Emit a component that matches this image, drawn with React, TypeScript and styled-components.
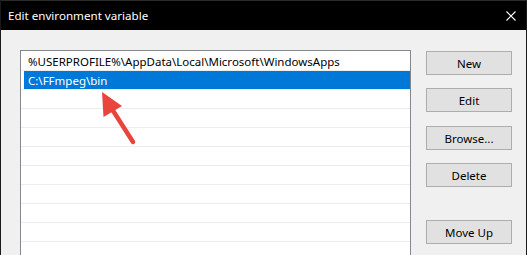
import React from "react";
import styled, { createGlobalStyle } from "styled-components";

const Global = createGlobalStyle`
  html, body { margin: 0; padding: 0; background: #f0f0f0; }
  body { width: 527px; height: 255px; overflow: hidden; }
`;

const Window = styled.div`
  position: relative;
  width: 527px;
  height: 255px;
  box-sizing: border-box;
  border-left: 1px solid #1a1a1a;
  border-right: 1px solid #1a1a1a;
  background: #f0f0f0;
  font-family: "Noto Sans", "Open Sans", sans-serif;
  font-size: 11.5px;
  display: flex;
  flex-direction: column;
  overflow: hidden;
`;

const TitleBar = styled.div`
  height: 30px;
  flex: none;
  background: #000;
  color: #fff;
  display: flex;
  align-items: center;
  justify-content: space-between;
  padding: 0 10px 0 8px;
  margin-left: -1px;
  margin-right: -1px;
  border-top: 1px solid #2b2b2b;
  box-sizing: border-box;
`;

const Title = styled.span`
  font-size: 11.6px;
`;

const CloseIcon = styled.svg`
  width: 10px;
  height: 10px;
  margin-right: 1px;
`;

const Body = styled.div`
  flex: 1;
  display: flex;
  align-items: flex-start;
  padding: 20px 14px 0 19px;
  gap: 15px;
`;

const ListBox = styled.div`
  position: relative;
  width: 391px;
  height: 260px;
  box-sizing: border-box;
  border: 1px solid #828790;
  background: #fff;
  padding-top: 1px;
  flex: none;
`;

const Row = styled.div`
  height: 19px;
  box-sizing: border-box;
  border-bottom: 1px solid #ececec;
  display: flex;
  align-items: center;
  padding-left: 3px;
`;

const RowText = styled.div<{ $selected?: boolean }>`
  flex: 1;
  height: 100%;
  display: flex;
  align-items: center;
  padding-left: 4px;
  background: ${(p) => (p.$selected ? "#0078d7" : "transparent")};
  color: ${(p) => (p.$selected ? "#fff" : "#000")};
  white-space: nowrap;
`;

const Buttons = styled.div`
  display: flex;
  flex-direction: column;
  padding-top: 1px;
  width: 86px;
  flex: none;
`;

const Button = styled.button<{ $gap: number }>`
  height: 24px;
  width: 86px;
  margin-bottom: ${(p) => p.$gap}px;
  box-sizing: border-box;
  border: 1px solid #adadad;
  background: #e1e1e1;
  color: #000;
  font-family: inherit;
  font-size: 11.5px;
  padding: 0;
`;

const Arrow = styled.svg`
  position: absolute;
  left: 0;
  top: 0;
  pointer-events: none;
`;

export default function App() {
  const rows = [
    "%USERPROFILE%\\AppData\\Local\\Microsoft\\WindowsApps",
    "C:\\FFmpeg\\bin",
    "", "", "", "", "", "", "", "", "", "",
  ];
  const buttons: [string, number][] = [
    ["New", 13],
    ["Edit", 14],
    ["Browse...", 13],
    ["Delete", 33],
    ["Move Up", 10],
  ];
  return (
    <>
      <Global />
      <Window>
        <TitleBar>
          <Title>Edit environment variable</Title>
          <CloseIcon viewBox="0 0 10 10">
            <path d="M0.5 0.5 L9.5 9.5 M9.5 0.5 L0.5 9.5" stroke="#fff" strokeWidth="1.1" />
          </CloseIcon>
        </TitleBar>
        <Body>
          <ListBox>
            {rows.map((r, i) => (
              <Row key={i}>
                <RowText $selected={i === 1}>{r}</RowText>
              </Row>
            ))}
          </ListBox>
          <Buttons>
            {buttons.map(([label, gap]) => (
              <Button key={label} $gap={gap}>
                {label}
              </Button>
            ))}
          </Buttons>
        </Body>
        <Arrow width="527" height="255" viewBox="0 0 527 255">
          <line x1="132" y1="142" x2="111" y2="109" stroke="#e8453c" strokeWidth="4.5" strokeLinecap="round" />
          <polygon points="101,92 102.5,117 121,106" fill="#e8453c" />
        </Arrow>
      </Window>
    </>
  );
}
